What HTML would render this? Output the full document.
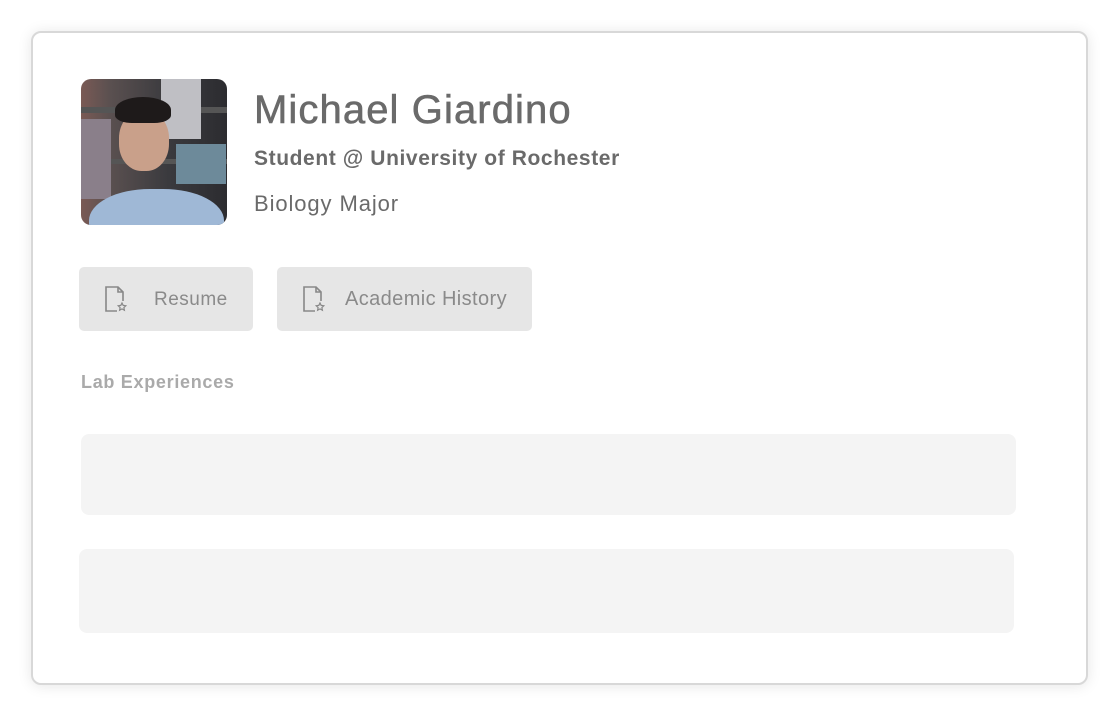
<!DOCTYPE html>
<html><head><style>
body{margin:0;width:1119px;height:715px;background:#fff;font-family:"Liberation Sans",sans-serif;position:relative;overflow:hidden}
.card{position:absolute;left:31px;top:31px;width:1053px;height:650px;border:2px solid #d8d8d8;border-radius:10px;box-shadow:0 1px 14px rgba(0,0,0,0.10);background:#fff}
.a{position:absolute}
.photo{left:81px;top:79px;width:146px;height:146px;border-radius:10px;overflow:hidden;background:linear-gradient(90deg,#7a5a55 0,#5a5050 20%,#3a3a3e 60%,#2c2c30 100%)}
.btn{top:267px;height:64px;background:#e6e6e6;border-radius:5px;color:#8a8a8a;font-size:19px;letter-spacing:0.4px}
.box{background:#f4f4f4;border-radius:8px}
</style></head><body>
<div class="card"></div>
<div class="a photo">
 <div class="a" style="left:0;top:28px;width:146px;height:6px;background:#555"></div>
 <div class="a" style="left:0;top:80px;width:146px;height:5px;background:#555"></div>
 <div class="a" style="left:80px;top:0;width:40px;height:60px;background:#bfbfc4"></div>
 <div class="a" style="left:0;top:40px;width:30px;height:80px;background:#8a7f8a"></div>
 <div class="a" style="left:95px;top:65px;width:50px;height:40px;background:#6d8a9a"></div>
 <div class="a" style="left:38px;top:32px;width:50px;height:60px;border-radius:45%;background:#c9a08a"></div>
 <div class="a" style="left:34px;top:18px;width:56px;height:26px;border-radius:50% 50% 30% 30%;background:#1e1a1a"></div>
 <div class="a" style="left:8px;top:110px;width:135px;height:70px;border-radius:45% 45% 0 0;background:#9fb8d6"></div>
</div>
<div class="a" style="left:254px;top:88px;font-size:40px;color:#6a6a6a;letter-spacing:1.1px;-webkit-text-stroke:0.6px #6a6a6a">Michael Giardino</div>
<div class="a" style="left:254px;top:147px;font-size:21px;font-weight:bold;color:#6a6a6a;letter-spacing:0.6px">Student @ University of Rochester</div>
<div class="a" style="left:254px;top:191px;font-size:22px;color:#6a6a6a;letter-spacing:0.9px">Biology Major</div>
<div class="a btn" style="left:79px;width:174px"><svg class="a" style="left:24px;top:18px" width="26" height="28" viewBox="0 0 26 28" fill="none" stroke="#888" stroke-width="1.6"><path d="M14 26H3V2h12l5 5v9"/><path d="M15 2v5h5"/><path d="M19 18l1.2 2.4 2.6.4-1.9 1.8.5 2.6-2.4-1.3-2.4 1.3.5-2.6-1.9-1.8 2.6-.4z" stroke-width="1.2"/></svg><span class="a" style="left:75px;top:22px;letter-spacing:0.5px">Resume</span></div>
<div class="a btn" style="left:277px;width:255px"><svg class="a" style="left:24px;top:18px" width="26" height="28" viewBox="0 0 26 28" fill="none" stroke="#888" stroke-width="1.6"><path d="M14 26H3V2h12l5 5v9"/><path d="M15 2v5h5"/><path d="M19 18l1.2 2.4 2.6.4-1.9 1.8.5 2.6-2.4-1.3-2.4 1.3.5-2.6-1.9-1.8 2.6-.4z" stroke-width="1.2"/></svg><span class="a" style="left:68px;top:21px;font-size:20px;letter-spacing:0.4px">Academic History</span></div>
<div class="a" style="left:81px;top:372px;font-size:18px;font-weight:bold;color:#aaa;letter-spacing:0.7px">Lab Experiences</div>
<div class="a box" style="left:81px;top:434px;width:935px;height:81px"></div>
<div class="a box" style="left:79px;top:549px;width:935px;height:84px"></div>
</body></html>
